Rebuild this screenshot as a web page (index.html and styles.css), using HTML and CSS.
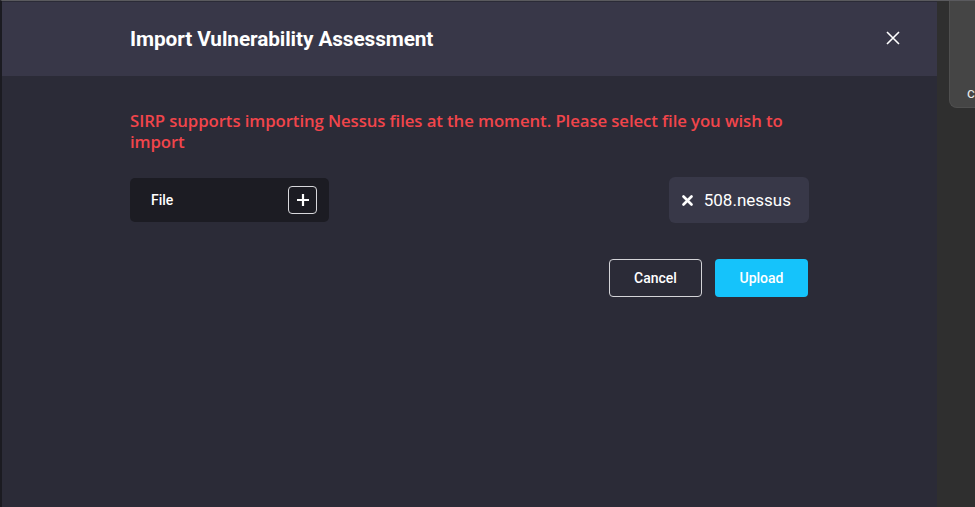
FILE: index.html
```html
<!DOCTYPE html>
<html lang="en">
<head>
    <meta charset="UTF-8">
    <meta name="viewport" content="width=device-width, initial-scale=1.0">
    <title>Import Vulnerability Assessment</title>
    <link rel="stylesheet" href="styles.css">
</head>
<body>
    <div class="screen">
        <div class="modal">
            <div class="modal-header">
                <div class="modal-title">Import Vulnerability Assessment</div>
                <button class="close-btn" aria-label="Close">
                    <svg width="14" height="14" viewBox="0 0 14 14">
                        <path d="M1 1 L13 13 M13 1 L1 13" stroke="#ffffff" stroke-width="1.6" fill="none"/>
                    </svg>
                </button>
            </div>

            <div class="modal-body">
                <p class="notice">SIRP supports importing Nessus files at the moment. Please select file you wish to import</p>

                <div class="file-row">
                    <div class="file-box">
                        <span>File</span>
                        <span class="add-btn">
                            <svg width="14" height="14" viewBox="0 0 14 14">
                                <path d="M7 1 V13 M1 7 H13" stroke="#ffffff" stroke-width="2.2" fill="none"/>
                            </svg>
                        </span>
                    </div>

                    <div class="chip">
                        <svg class="chip-x" width="11" height="11" viewBox="0 0 11 11">
                            <path d="M1.5 1.5 L9.5 9.5 M9.5 1.5 L1.5 9.5" stroke="#ffffff" stroke-width="2.6" stroke-linecap="round" fill="none"/>
                        </svg>
                        <span>508.nessus</span>
                    </div>
                </div>

                <div class="actions">
                    <button class="btn btn-outline">Cancel</button>
                    <button class="btn btn-primary">Upload</button>
                </div>
            </div>
        </div>

        <div class="side">
            <div class="side-card"><span>c</span></div>
        </div>
    </div>
</body>
</html>
```

FILE: styles.css
```css
* {
    box-sizing: border-box;
}

html, body {
    margin: 0;
    height: 100%;
    background-color: #2f2f2f;
    font-family: Roboto, "Liberation Sans", Arial, sans-serif;
    color: #ffffff;
    overflow: hidden;
}

.screen {
    display: flex;
    height: 507px;
    border-top: 1px solid #5a5a5e;
    border-left: 2px solid #1b1b21;
}

.modal {
    width: 935px;
    flex-shrink: 0;
    display: flex;
    flex-direction: column;
    background-color: #2b2b37;
    padding-top: 1px;
}

.modal-header {
    height: 74px;
    background-color: #383748;
    display: flex;
    align-items: center;
    justify-content: space-between;
    padding: 0 37px 0 128px;
}

.modal-title {
    font-size: 20.8px;
    font-weight: 700;
    letter-spacing: -0.1px;
    margin-top: -1px;
}

.close-btn {
    background: none;
    border: none;
    padding: 0;
    cursor: pointer;
    display: flex;
    margin-top: -2px;
}

.modal-body {
    width: 679px;
    margin-left: 128px;
    padding-top: 34px;
}

.notice {
    margin: 0;
    color: #f1454b;
    font-family: "Open Sans", "Noto Sans", sans-serif;
    font-size: 16.8px;
    font-weight: 600;
    line-height: 21px;
    letter-spacing: -0.1px;
}

.file-row {
    display: flex;
    align-items: center;
    justify-content: space-between;
    margin-top: 25px;
}

.file-box {
    width: 199px;
    height: 44px;
    background-color: #1c1c23;
    border-radius: 5px;
    display: flex;
    align-items: center;
    justify-content: space-between;
    padding: 0 12px 0 21px;
    font-size: 14px;
    font-weight: 500;
}

.add-btn {
    width: 29px;
    height: 28px;
    border: 1.5px solid #d8d8dc;
    border-radius: 4px;
    display: flex;
    align-items: center;
    justify-content: center;
}

.chip {
    height: 46px;
    background-color: #383848;
    border-radius: 6px;
    display: flex;
    align-items: center;
    gap: 11px;
    padding: 0 18px 0 13px;
    font-size: 17px;
}

.actions {
    display: flex;
    justify-content: flex-end;
    gap: 13px;
    margin-top: 36px;
    margin-right: 1px;
}

.btn {
    width: 93px;
    height: 38px;
    border-radius: 4px;
    font-family: Roboto, "Liberation Sans", Arial, sans-serif;
    font-size: 14px;
    font-weight: 500;
    color: #ffffff;
    cursor: pointer;
}

.btn-outline {
    background: transparent;
    border: 1.5px solid #d4d4d8;
}

.btn-primary {
    background-color: #15c3fb;
    border: none;
}

.side {
    flex: 1;
    min-width: 0;
    overflow: hidden;
    padding-left: 12px;
}

.side-card {
    height: 108px;
    margin-top: -1px;
    background-color: #454545;
    border: 1px solid #4f4f4f;
    border-right: none;
    border-radius: 0 0 0 8px;
    display: flex;
    align-items: flex-end;
    padding: 0 0 5px 17px;
    font-size: 15px;
    color: #e8e8e8;
    white-space: nowrap;
}
```
